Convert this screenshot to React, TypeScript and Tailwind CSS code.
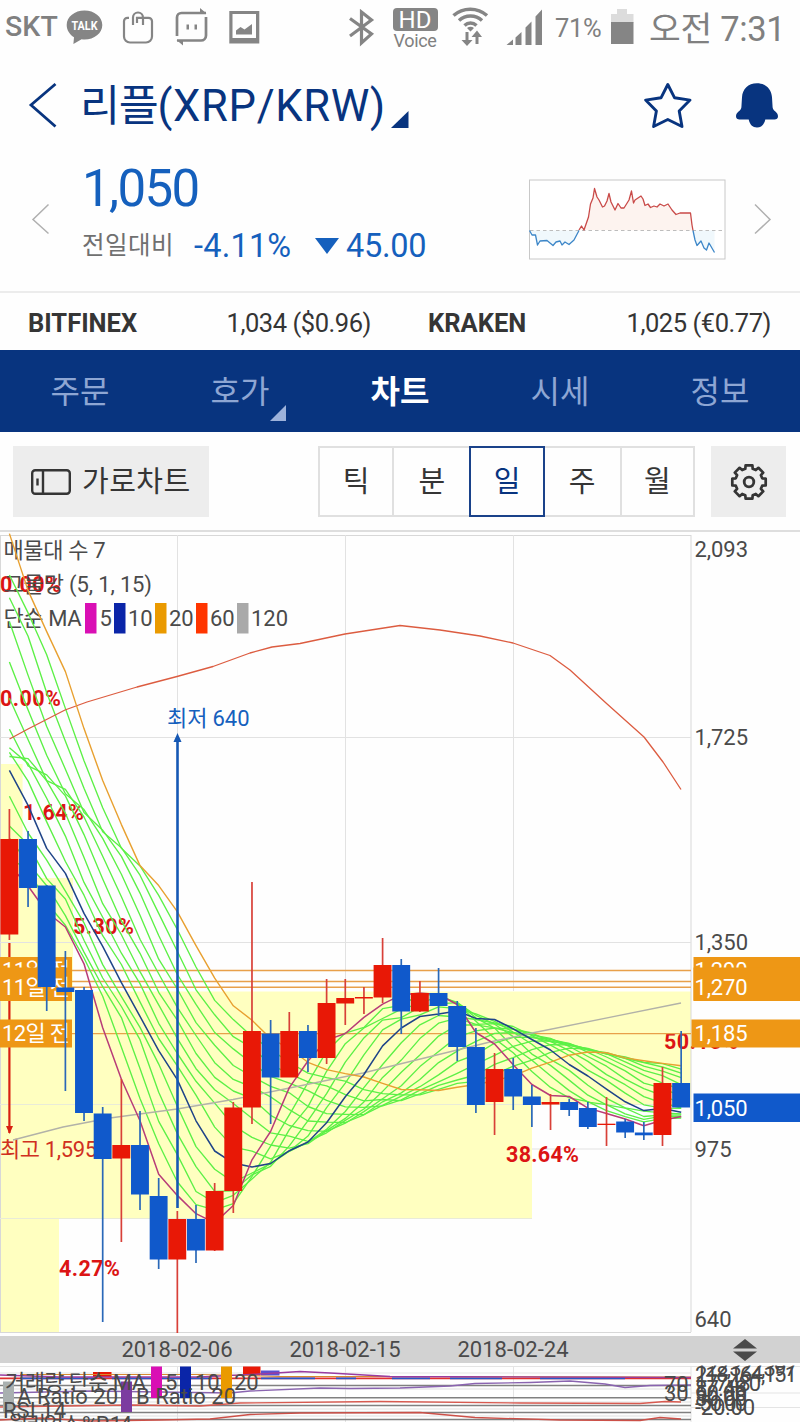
import React from "react";

const X0 = 9.4;
const STEP = 18.66;

// [top of body, bottom of body, high, low, 1 = rising / 0 = falling], in chart units
const candles: number[][] = [
  [839, 934.5, 809, 940, 1],
  [839, 888, 831, 907, 0],
  [885.5, 987, 885, 1011, 0],
  [987.5, 992, 951, 1091, 0],
  [990, 1113, 987, 1121, 0],
  [1113.5, 1159, 1107, 1322, 0],
  [1145, 1158.5, 1079, 1242, 1],
  [1145, 1194.5, 1111, 1210, 0],
  [1196, 1259.5, 1178, 1269, 0],
  [1219, 1259.5, 1211, 1333, 1],
  [1219, 1250.5, 1205, 1263, 0],
  [1191, 1250.5, 1183, 1251, 1],
  [1107.5, 1191, 1102, 1213, 1],
  [1031, 1107.5, 882, 1124, 1],
  [1033.5, 1077.5, 1020, 1124, 0],
  [1031, 1077.5, 1012, 1077, 1],
  [1031, 1058, 1025, 1072, 0],
  [1003, 1058, 979, 1064, 1],
  [998, 1003.5, 979, 1025, 1],
  [997, 998.5, 987, 1014, 1],
  [965, 997.5, 938, 1003, 1],
  [965, 1011.5, 959, 1034, 0],
  [993, 1011.5, 981, 1012, 1],
  [993, 1006, 968, 1016, 0],
  [1006, 1047, 1001, 1061, 0],
  [1047, 1105, 1028, 1113, 0],
  [1069, 1102, 1053, 1135, 1],
  [1069, 1096.5, 1058, 1110, 0],
  [1096.5, 1105, 1085, 1127, 0],
  [1102, 1104.5, 1094, 1130, 1],
  [1102, 1110, 1099, 1116, 0],
  [1108, 1127, 1102, 1129, 0],
  [1123.7, 1125, 1097, 1146, 1],
  [1121.5, 1132.5, 1119, 1138, 0],
  [1132.5, 1135.3, 1122, 1140, 0],
  [1083, 1135, 1067, 1146, 1],
  [1083, 1107.5, 1031, 1107, 0],
];

const history = [-252, 167, 192, -27, 119, 265, 375, 860, 699, 571, 538, 557, 742, 713, 829, 783, 857, 917, 929];
const closes = [...history, ...candles.map((c) => (c[4] ? c[0] : c[1]))];

function ma(n: number) {
  return candles
    .map((_, i) => {
      const end = i + history.length + 1;
      const win = closes.slice(end - n, end);
      const y = win.reduce((a, b) => a + b, 0) / n;
      return `${(X0 + STEP * i).toFixed(1)},${y.toFixed(1)}`;
    })
    .join(" ");
}

const net = [6, 7, 8, 9, 11, 12, 13, 14, 15, 16, 17, 18, 19];

function Line({ p, c, w = 1.3 }: { p: string; c: string; w?: number }) {
  return <polyline points={p} fill="none" stroke={c} strokeWidth={w} strokeLinejoin="round" />;
}

function StatusBar() {
  return (
    <div className="flex h-[54px] shrink-0 items-start text-[#808080]">
      <span className="ml-[5px] mt-[9px] w-[58px] text-[28.500px] font-medium leading-[36px] tracking-[0.1px]">SKT</span>
      <svg className="h-[54px] w-[210px]" viewBox="63 0 210 54">
        <path d="M84.500 10.500c-9.800 0-17.800 6.200-17.800 14.500 0 5.200 3 9.600 7.300 12.200L73.400 44l8.200-4.700c1 .1 1.900.2 2.900.2 9.800 0 17.800-6.200 17.800-14.500s-8-14.500-17.800-14.500z" fill="#858585" />
        <text x="71.500" y="30" fontSize="12.500" fontWeight="700" fill="#fff" textLength="26" lengthAdjust="spacingAndGlyphs">TALK</text>
        <g fill="none" stroke="#858585" strokeWidth="2.200">
          <path d="M129 17.800h-1.500a3.500 3.500 0 0 0-3.500 3.500v15.200a6 6 0 0 0 6 6h16a6 6 0 0 0 6-6V21.300a3.500 3.500 0 0 0-3.500-3.500h-11.500V23M133 25v-7.500a5 5 0 0 1 10 0V25" />
          <path d="M177 36V17.500a4.500 4.500 0 0 1 4.500-4.500H206M206 17v18.500a5 5 0 0 1-5 5H177" strokeWidth="2.700" />
        </g>
        <path d="M200 8l6.500 5.500H200zM183 45.500l-6.500-5.500h6.500zM186.500 24.500h2.500v5h-2.500zM194.500 24.500h2.500v5h-2.500z" fill="#858585" />
        <path fillRule="evenodd" d="M229.300 11h30v32.500h-30zM232.500 14v24h23.500V14z" fill="#858585" />
        <path d="M236 34.500v-4l4.500-3.500 4 2.500 7.500-5.500v10.500z" fill="#858585" />
      </svg>
      <svg className="ml-[72px] h-[54px] w-[34px]" viewBox="345 0 34 54">
        <path d="M350 18.500l21.500 15.500-10 9V12l10 8-21.500 16" fill="none" stroke="#858585" strokeWidth="3.200" />
      </svg>
      <div className="ml-[13px] mt-[8px] flex w-[46px] flex-col items-center">
        <span className="h-[23px] w-[45px] rounded-[4px] bg-[#858585] text-center text-[24px] leading-[24px] text-white">HD</span>
        <span className="text-[18px] leading-[19px] tracking-[-0.3px]">Voice</span>
      </div>
      <svg className="ml-[10px] h-[54px] w-[100px]" viewBox="448 0 100 54">
        <g fill="none" stroke="#858585" strokeWidth="3.500">
          <path d="M453.500 15.500c9.500-8.500 24-8.500 33.500 0M459 20.500c6.500-6 16.500-6 23 0M464.500 25.500c3.500-3.200 8.500-3.200 12 0" />
        </g>
        <path d="M467 28c2.200-1.800 5-1.800 7 0l-3.500 3.500zM465.500 32h3v8h4l-5.500 6-5.500-6h4zM475.500 44v-7h-4l5.500-6.500 5 6.500h-3.500v7z" fill="#858585" />
        <path d="M506.500 45l6.500-5.500V45zM515.500 37.500l6-5.500v13h-6zM525.500 27.500l6-6v23.500h-6zM535.500 16.500l6.500-7V45h-6.500z" fill="#858585" />
      </svg>
      <span className="ml-[7px] mt-[14px] w-[53px] text-[25.500px] leading-[28px] tracking-[-0.3px]">71%</span>
      <svg className="ml-[2px] h-[54px] w-[26px]" viewBox="610 0 26 54">
        <path d="M611 14h6v-5h10v5h6.500v9H611z" fill="#dcdcdc" />
        <rect x="611" y="22" width="22.500" height="22" fill="#858585" />
      </svg>
      <span className="ml-[13px] mt-[8px] whitespace-nowrap text-[34.500px] leading-[42px] tracking-[-0.3px]">오전 7:31</span>
    </div>
  );
}

function TitleBar() {
  return (
    <div className="flex h-[96px] shrink-0 items-start text-[#08347f]">
      <svg className="h-[96px] w-[80px]" viewBox="0 54 80 96">
        <path d="M55.500 84L31 105l24.500 21.500" fill="none" stroke="#08347f" strokeWidth="2.800" />
      </svg>
      <h1 className="mt-[25px] w-[306px] whitespace-nowrap text-[43.500px] font-normal leading-[56px] tracking-[0.7px]">
        <span className="tracking-[-1.300px]">리플</span>(XRP/KRW)
      </h1>
      <svg className="h-[96px] w-[414px]" viewBox="386 54 414 96" fill="#08347f">
        <path d="M391 128l17.500-17v17z" />
        <path d="M667.800 84.500l6.800 13.300 15.400 2.300-10.800 11 2.800 15.400-14.200-7-14.200 7 2.800-15.400-10.800-11 15.400-2.300z" fill="none" stroke="#08347f" strokeWidth="2.900" strokeLinejoin="round" />
        <path d="M757 83.300c-9 0-14.500 6-15 14l-.6 10c-.3 4-5.400 4.500-5.400 9 0 2.200 1.500 3.200 3.500 3.200h9.200c1 5 4 8 8.300 8s7.300-3 8.300-8h9.200c2 0 3.500-1 3.500-3.200 0-4.500-5.100-5-5.400-9l-.6-10c-.5-8-6-14-15-14z" />
      </svg>
    </div>
  );
}

const RISE =
  "579,230 581.500,226 584,230 588.500,217 590.500,204 593,198 594.500,188.500 597,197 599,200 602.500,207 604.500,206 607,201 609,193.500 611,202 615,210 618,203.500 621,208 624,208 629,200 631.500,191 633.500,203 635,200 638,198 641,196 643,199 645,205.500 648,204 650.500,207.500 654,206 657,207 660,204 664,206 668,204 672,210 676,214.500 680,213 690.500,213 692,225 693,230.500";
const FALL_A = "529.500,230.500 532,235 535.500,235 537.500,245 540,241 547,240.500 553,245.500 556,242 560,241 562,245 565,242 569,244.500 574,240 579,230.500";
const FALL_B = "693,230.500 695,240 697,245.500 701,241 704,248 706.500,250 709,243 714.500,252.500";

function PricePanel() {
  return (
    <div className="flex h-[143px] shrink-0 items-start border-b-2 border-[#ececec] text-[#1560bd]">
      <svg className="h-[140px] w-[82px]" viewBox="0 150 82 140">
        <path d="M48.500 204.500L33 219.500l15.500 14" fill="none" stroke="#b0b0b0" strokeWidth="1.500" />
      </svg>
      <div className="flex w-[446px] flex-col">
        <div className="mt-[9px] text-[51px] leading-[60px] tracking-[-1.600px]">1,050</div>
        <div className="mt-[9px] flex h-[36px] items-center">
          <span className="w-[112px] text-[24.500px] tracking-[0.5px] text-[#707070]">전일대비</span>
          <span className="w-[121px] text-[32.500px] tracking-[0.2px]">-4.11%</span>
          <svg className="h-[16px] w-[24px]" viewBox="0 0 24 16"><path d="M0 0h24L12 16z" fill="#1560bd" /></svg>
          <span className="ml-[7px] text-[32.500px] tracking-[-0.3px]">45.00</span>
        </div>
      </div>
      <svg className="h-[140px] w-[272px]" viewBox="528 150 272 140">
        <rect x="529.500" y="180" width="195.500" height="79" fill="#fff" stroke="#c8c8c8" />
        <polygon points={RISE} fill="#fdf3ef" />
        <polygon points={FALL_A} fill="#f0f8fc" />
        <polygon points={FALL_B + " 714.500,230.500"} fill="#f0f8fc" />
        <path d="M530 230.500h195" stroke="#bdbdbd" strokeDasharray="3.500 3" />
        <Line p={RISE} c="#c94a48" />
        <Line p={FALL_A} c="#3c86c8" />
        <Line p={FALL_B} c="#3c86c8" />
        <path d="M755 204.500l15 15-15 14" fill="none" stroke="#b0b0b0" strokeWidth="1.500" />
      </svg>
    </div>
  );
}

function Exchanges() {
  return (
    <div className="flex h-[57px] shrink-0 items-center pt-[3px] text-[25.500px] leading-[54px] text-[#353535]">
      {[
        ["BITFINEX", "1,034 ($0.96)"],
        ["KRAKEN", "1,025 (€0.77)"],
      ].map(([name, v]) => (
        <div key={name} className="flex w-[400px] justify-between pl-[28px] pr-[29px]">
          <b className="font-bold tracking-[0px]">{name}</b>
          <span className="tracking-[-0.45px]">{v}</span>
        </div>
      ))}
    </div>
  );
}

function Tabs() {
  return (
    <div className="grid h-[82px] shrink-0 grid-cols-5 bg-[#08347f] pt-[2px] text-center text-[32px] leading-[80px] text-[#8ea6d3]">
      <span>주문</span>
      <span className="relative">
        호가
        <svg className="absolute left-[110px] top-[53px] h-[16px] w-[16px]" viewBox="0 0 16 16"><path d="M0 16L16 0v16z" fill="#9db2db" /></svg>
      </span>
      <b className="font-bold text-white">차트</b>
      <span>시세</span>
      <span>정보</span>
    </div>
  );
}

function gear() {
  const pts: string[] = [];
  for (let i = 0; i < 8; i++) {
    const a = (i * Math.PI) / 4;
    [[-0.27, 13.700], [-0.2, 17], [0.2, 17], [0.27, 13.700]].forEach(([d, r]) => {
      pts.push(`${(748.700 + r * Math.sin(a + d)).toFixed(1)},${(481 - r * Math.cos(a + d)).toFixed(1)}`);
    });
  }
  return pts.join(" ");
}

function Toolbar() {
  const cell = "flex w-[76px] items-center justify-center pt-[3px]";
  return (
    <div className="flex h-[100px] shrink-0 items-start border-b-2 border-[#dedede] pt-[14px] text-[29px] text-[#353535]">
      <div className="ml-[13px] flex h-[71px] w-[196px] items-center bg-[#ededed] pl-[18px]">
        <svg className="h-[26px] w-[40px]" viewBox="0 0 40 26" fill="none" stroke="#353535" strokeWidth="2.400">
          <rect x="1.200" y="1.200" width="37.600" height="23.600" rx="3" />
          <path d="M12 1v24M6.500 9.500v7" />
        </svg>
        <span className="ml-[11px] whitespace-nowrap pt-[3px] tracking-[0.5px]">가로차트</span>
      </div>
      <div className="ml-[109px] flex h-[71px] w-[377px] border-2 border-[#e0e0e0]">
        <span className="flex w-[75px] items-center justify-center border-r-2 border-[#e0e0e0] pt-[3px]">틱</span>
        <span className={cell}>분</span>
        <span className="-my-[2px] flex w-[76px] items-center justify-center border-2 border-[#1a428a] pt-[3px] text-[#08347f]">일</span>
        <span className={cell}>주</span>
        <span className="flex w-[74px] items-center justify-center border-l-2 border-[#e0e0e0] pt-[3px]">월</span>
      </div>
      <div className="ml-[16px] flex h-[71px] w-[75px] items-center justify-center bg-[#ededed]">
        <svg className="h-[40px] w-[40px]" viewBox="728.700 461 40 40" fill="none" stroke="#353535" strokeWidth="2.700" strokeLinejoin="round">
          <polygon points={gear()} />
          <circle cx="748.700" cy="481" r="4.800" strokeWidth="2.800" />
        </svg>
      </div>
    </div>
  );
}

const legend: [string, number, string, number, number][] = [
  ["#d90fb4", 85, "5", 99.500, 12],
  ["#0a25a8", 114, "10", 128, 24.500],
  ["#ea9a00", 155, "20", 169, 24.500],
  ["#ff3500", 196, "60", 210, 24.500],
  ["#a9a9a9", 237, "120", 251, 37],
];

function Chart() {
  return (
    <svg className="h-[804px] w-full shrink-0" viewBox="0 532 800 804" fontSize="22" fill="#4a4a4a">
      <rect x="0" y="764" width="22.600" height="114" fill="#ffffc0" />
      <rect x="0" y="878" width="73" height="113.500" fill="#ffffc0" />
      <rect x="0" y="991.500" width="691" height="113" fill="#ffffc0" />
      <rect x="0" y="1104.500" width="532" height="114" fill="#ffffc0" />
      <rect x="0" y="1218.500" width="59" height="114" fill="#ffffc0" />
      <g stroke="#e2e2e2" fill="none">
        <path d="M0 535.500h691M0 1332.500h691M.5 535v797M691 535v797" stroke="#d8d8d8" />
        <path d="M177.500 535v456M345.500 535v456M513.500 535v456M0 737.500h691M0 942.500h691M532 1149h159" />
        <path d="M0 1104.500h691M0 1218.500h532" stroke="#e9ebd8" />
      </g>
      <g fontWeight="700" fill="#dc1414" fontSize="21.500">
        <text x="0" y="592" textLength="61">0.00%</text>
        <text x="0" y="706" textLength="61">0.00%</text>
        <text x="23" y="820" textLength="61">1.64%</text>
        <text x="73" y="934" textLength="61">5.30%</text>
        <text x="664" y="1048.500" textLength="74">50.15%</text>
        <text x="506" y="1162" textLength="73">38.64%</text>
        <text x="59" y="1276" textLength="61">4.27%</text>
      </g>
      <text x="3.500" y="558" textLength="102">매물대 수 7</text>
      <text x="3.500" y="592" textLength="148.500">그물망 (5, 1, 15)</text>
      <text x="3.500" y="626" textLength="78">단순 MA</text>
      {legend.map(([c, x, t, tx, w]) => (
        <g key={t}>
          <rect x={x} y="603" width="11.500" height="30.500" fill={c} />
          <text x={tx} y="626" textLength={w}>{t}</text>
        </g>
      ))}
      <path d="M0 970.500h691M0 981.500h691M0 987.300h691M0 1033.600h691" stroke="#e8a04a" strokeWidth="1.400" />
      <path d="M9.400 943v190" stroke="#d82010" strokeWidth="2.200" />
      <rect x="0" y="957" width="72" height="44" fill="#ee9715" />
      <rect x="693.500" y="957" width="107" height="44" fill="#ee9715" />
      <g fill="#fff">
        <text x="2" y="977.500" textLength="68">11일 전</text>
        <text x="694.500" y="977.500" textLength="53">1,290</text>
      </g>
      <rect x="0" y="967.500" width="72" height="33" fill="#ee9715" />
      <rect x="693.500" y="967.500" width="107" height="33" fill="#ee9715" />
      <rect x="0" y="1019.500" width="72" height="28" fill="#ee9715" />
      <rect x="691.500" y="1019.500" width="109" height="28" fill="#ee9715" />
      <rect x="693.500" y="1093.500" width="107" height="28.500" fill="#1059cb" />
      <g fill="#fff">
        <text x="2" y="994.500" textLength="68">11일 전</text>
        <text x="2" y="1041" textLength="68">12일 전</text>
        <text x="694.500" y="994.500" textLength="53">1,270</text>
        <text x="694.500" y="1041" textLength="53">1,185</text>
        <text x="694.500" y="1115.500" textLength="53">1,050</text>
      </g>
      <path d="M6 1126h7l-3.500 8z" fill="#d82010" />
      <text x="0" y="1157" fill="#d03020" textLength="97">최고 1,595</text>
      <text x="167" y="725.500" fill="#1560bd" textLength="82.500">최저 640</text>

      {net.map((n) => (
        <Line key={n} p={ma(n)} c="#5cf046" w={1.35} />
      ))}
      <Line p="13,1140 63,1127 110,1118 177,1109 233,1099.500 363,1073 490,1042 532,1033 681,1003" c="#b2b2a8" />
      <Line p="9.500,739 28,729 65,710 87,702 137,687 177,676.500 213,666.500 250,653 272,647 300,643.500 345,634 400,625.500 440,630 480,636 513,643 550,655.500 570,670 606,703 644,737 663,762 681,789.500" c="#dc5c40" />
      <Line p={ma(20)} c="#e8a030" w={1.4} />
      <Line p={ma(10)} c="#1f4488" w={1.5} />
      <Line p={ma(5)} c="#b83c78" w={1.5} />
      <path d="M177.500 740v468" stroke="#1658b4" strokeWidth="2.600" />
      <path d="M173.500 742l4-9 4 9z" fill="#1658b4" />
      {candles.map(([t, b, h, l, up], i) => {
        const x = X0 + STEP * i;
        const c = up ? "#e81806" : "#1059cb";
        return (
          <g key={i}>
            <path d={`M${x} ${h}V${l}`} stroke={up ? "#d84038" : "#2a68b8"} strokeWidth="1.700" />
            <rect x={x - 9} y={t} width="17.900" height={b - t} fill={c} />
          </g>
        );
      })}
      <text x="694.500" y="556.500" textLength="53.500">2,093</text>
      <text x="694.500" y="745" textLength="53.500">1,725</text>
      <text x="694.500" y="950" textLength="53.500">1,350</text>
      <text x="694.500" y="1157" textLength="37">975</text>
      <text x="694.500" y="1326.500" textLength="37">640</text>
    </svg>
  );
}

function DateAxis() {
  return (
    <div className="flex h-[27px] shrink-0 bg-[#d2d2d2] text-center text-[22px] leading-[28px] text-[#4a4a4a]">
      <span className="ml-[93px] w-[168px]">2018-02-06</span>
      <span className="w-[168px]">2018-02-15</span>
      <span className="w-[168px]">2018-02-24</span>
      <svg className="ml-[136px] mt-[3px] h-[22px] w-[24px]" viewBox="0 0 24 22" fill="#4a4a4a">
        <path d="M0 9.500L12 0l12 9.500zM0 12.500h24L12 22z" />
      </svg>
    </div>
  );
}

function Indicators() {
  const stack: [number, number, string, number][] = [
    [695, 1376, "122,322,397", 102],
    [695, 1381.500, "218,164,151", 102],
    [695, 1391, "177,480", 66],
    [695, 1396, "87.48", 52],
    [695, 1401, "50.00", 52],
    [695, 1406, "80.00", 52],
    [695, 1411, "-50.00", 52],
    [695, 1415, "-20.00", 60],
  ];
  return (
    <svg className="h-[59px] w-full shrink-0" viewBox="0 1363 800 59" fontSize="22" fill="#4a4a4a">
      <path d="M0 1366.500h800M177.500 1366v56M345.500 1366v56M513.500 1366v56M691 1366v56M0 1373h691M691 1393h109M691 1407.500h109" stroke="#e4e4e4" fill="none" />
      <path d="M0 1385.500h691M0 1397.800h691M0 1405.500h691M0 1412.500h691M0 1419.500h691" stroke="#808080" strokeWidth="1.500" />
      <path d="M0 1389h691M0 1402h691M0 1409h691M0 1416h691" stroke="#e0e0e0" />
      <rect x="93" y="1372" width="18.500" height="5" fill="#e81806" />
      <rect x="243" y="1366.500" width="17.500" height="9" fill="#e81806" />
      <rect x="261" y="1370.500" width="18.500" height="5" fill="#5a50d0" />
      <path d="M0 1378.300h691" stroke="#e03030" strokeWidth="1.800" />
      <path d="M20 1378.300h75M112 1378.300h100M261 1378.300h54M336 1378.300h20M392 1378.300h38M450 1378.300h52M540 1378.300h85" stroke="#2858c8" strokeWidth="1.800" />
      <path d="M20 1374.500h180l80 2h120l291 .5" stroke="#d88a30" fill="none" />
      <Line p="0,1375 60,1377 200,1377 260,1374 300,1371.500 330,1373 390,1376.500 691,1377.500" c="#9a3ca0" />
      <Line p="0,1393 90,1391 230,1393 250,1391 320,1388 350,1388.500 400,1388 450,1386 475,1383.500 530,1382.500 570,1381 605,1384 625,1387.500 650,1385.500 691,1385" c="#8a64b0" />
      <Line p="0,1407 130,1405 200,1406 240,1403 380,1401.500 520,1403 640,1403.500 665,1401.500 681,1402" c="#d85a50" />
      <Line p="0,1420 40,1418 90,1421 160,1420 210,1419 250,1414.500 300,1413 420,1412.500 475,1417.500 560,1420 640,1420.500 660,1417.500 681,1419" c="#cc5048" />
      <rect x="151" y="1366.500" width="11" height="31.500" fill="#d90fb4" />
      <rect x="180" y="1366.500" width="11" height="31.500" fill="#0a25a8" />
      <rect x="221" y="1366.500" width="11" height="31.500" fill="#ea9a00" />
      <rect x="3" y="1381.500" width="11" height="30.500" fill="#a9b0b0" />
      <rect x="121" y="1381.500" width="11" height="30.500" fill="#7c3ca0" />
      <text x="5" y="1390" textLength="141">거래량 단순 MA</text>
      <text x="165" y="1390">5</text>
      <text x="195" y="1390">10</text>
      <text x="234" y="1390">20</text>
      <text x="17" y="1404" textLength="101">A Ratio 20</text>
      <text x="136" y="1404" textLength="100">B Ratio 20</text>
      <text x="3" y="1418" textLength="63">RSI 14</text>
      <text x="8" y="1432" textLength="124">윌리엄스 %R 14</text>
      <text x="664" y="1391.500">70</text>
      <text x="664" y="1400.500">30</text>
      {stack.map(([x, y, t, w]) => (
        <text key={t} x={x} y={y} textLength={w}>{t}</text>
      ))}
      <path d="M691.500 1363h109v2.500h-109z" fill="#fff" />
    </svg>
  );
}

export default function App() {
  return (
    <div className="flex h-[1422px] w-[800px] flex-col overflow-hidden bg-[#fefefe] font-['Roboto','Noto_Sans_CJK_KR',sans-serif]">
      <StatusBar />
      <TitleBar />
      <PricePanel />
      <Exchanges />
      <Tabs />
      <Toolbar />
      <Chart />
      <DateAxis />
      <Indicators />
    </div>
  );
}
